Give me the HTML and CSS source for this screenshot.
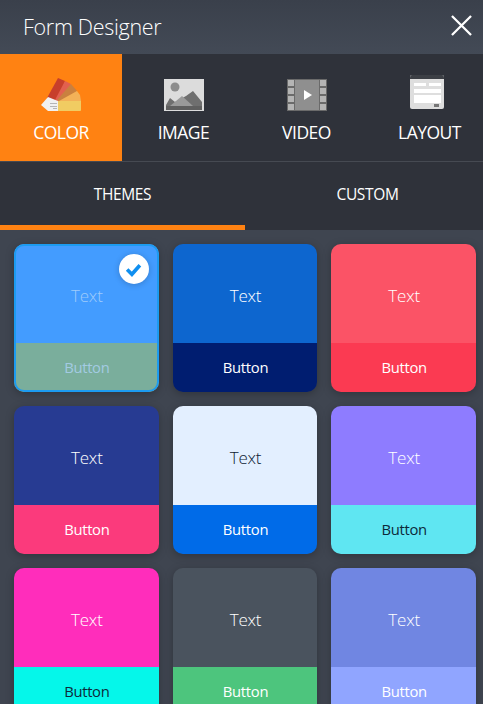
FILE: index.html
```html
<!DOCTYPE html>
<html lang="en">
<head>
    <meta charset="UTF-8">
    <title>Form Designer</title>
    <link rel="stylesheet" href="styles.css">
</head>
<body>
<div class="designer">
    <header class="top">
        <h1>Form Designer</h1>
        <svg class="close" viewBox="0 0 22 22"><path d="M1 1L21 21M21 1L1 21"/></svg>
    </header>
    <nav class="types">
        <a class="type active">
            <svg class="type-icon color-icon" viewBox="0 0 40 34">
                <path fill="#c73f2b" d="M6 20L17 0 L24 3 L16 24z"/>
                <path fill="#e2604f" d="M14 22L24 3 L30 6 L18 24z"/>
                <path fill="#c9803f" d="M16 22L30 6 L36 13 L20 24z"/>
                <path fill="#f3b158" d="M18 23L36 13 L39 17 L40 23z"/>
                <path fill="#f1cc62" d="M17 23H40V32Q40 33 39 33H17z"/>
                <path fill="#f1f1f1" d="M0 27L7 19 L17 23V33H7z"/>
                <path fill="#b5b5b5" d="M9 25h7v1h-7zM9 28h7v1h-7zM12 30h4v1h-4z"/>
            </svg>
            <span>COLOR</span>
        </a>
        <a class="type">
            <svg class="type-icon" viewBox="0 0 40 32">
                <path fill="#dcdcdc" d="M0 0H40V32H0z"/>
                <circle fill="#8c8c8c" cx="11" cy="8" r="4.500"/>
                <path fill="#6f6f6f" d="M2 26L6 19 L11 23 L22 17 L29 12 L38 23 V31H2z"/>
                <path fill="#9a9a9a" d="M6 27L18 17 L29 27z"/>
                <path fill="#5f5f5f" d="M2 27H38V31H2z"/>
            </svg>
            <span>IMAGE</span>
        </a>
        <a class="type">
            <svg class="type-icon" viewBox="0 0 40 32">
                <path fill="#6a6a6a" d="M0 0H40V32H0z"/>
                <path fill="#8f8f8f" d="M8 1H32V31H8z"/>
                <path fill="#b4b4b4" d="M1 1H7V7H1zM1 9H7V15H1zM1 17H7V23H1zM1 25H7V31H1zM33 1H39V7H33zM33 9H39V15H33zM33 17H39V23H33zM33 25H39V31H33z"/>
                <path fill="#fff" d="M17 11L25 16 L17 21z"/>
            </svg>
            <span>VIDEO</span>
        </a>
        <a class="type">
            <svg class="type-icon layout-icon" viewBox="0 0 34 34">
                <path fill="#dedede" d="M0 2Q0 0 2 0H32Q34 0 34 2V32Q34 34 32 34H2Q0 34 0 32z"/>
                <path fill="#3c3f45" d="M0 3Q0 0 2 0H32Q34 0 34 3V4H0z"/>
                <path fill="#fff" d="M4 8H16V11H4zM19 8H31V11H19zM4 14H31V18H4zM4 20H31V28H4z"/>
                <path fill="#777" d="M24 29H29V32H24z"/>
            </svg>
            <span>LAYOUT</span>
        </a>
    </nav>
    <div class="tabs">
        <a class="tab active">THEMES</a>
        <a class="tab">CUSTOM</a>
    </div>
    <div class="themes">
        <div class="theme selected" style="--main:#439cff;--btn:#7aae9c;--text:#9fcbfb;--btn-text:#a3cbe2">
            <span class="check">
                <svg viewBox="0 0 16 16"><path d="M2 8L6.500 12.500 L14 4"/></svg>
            </span>
            <div class="theme-main"><span>Text</span></div>
            <div class="theme-btn"><span>Button</span></div>
        </div>
        <div class="theme" style="--main:#0d66cf;--btn:#001d70;--text:#fff;--btn-text:#fff">
            <div class="theme-main"><span>Text</span></div>
            <div class="theme-btn"><span>Button</span></div>
        </div>
        <div class="theme" style="--main:#fb5366;--btn:#fb3a52;--text:#fff;--btn-text:#fff">
            <div class="theme-main"><span>Text</span></div>
            <div class="theme-btn"><span>Button</span></div>
        </div>
        <div class="theme" style="--main:#273b92;--btn:#fb3a7c;--text:#fff;--btn-text:#fff">
            <div class="theme-main"><span>Text</span></div>
            <div class="theme-btn"><span>Button</span></div>
        </div>
        <div class="theme" style="--main:#e3efff;--btn:#006be8;--text:#0d1b33;--btn-text:#fff">
            <div class="theme-main"><span>Text</span></div>
            <div class="theme-btn"><span>Button</span></div>
        </div>
        <div class="theme" style="--main:#8e7cff;--btn:#5fe6f2;--text:#fff;--btn-text:#0d2a3a">
            <div class="theme-main"><span>Text</span></div>
            <div class="theme-btn"><span>Button</span></div>
        </div>
        <div class="theme" style="--main:#ff2dbb;--btn:#05f7ea;--text:#fff;--btn-text:#0d2a3a">
            <div class="theme-main"><span>Text</span></div>
            <div class="theme-btn"><span>Button</span></div>
        </div>
        <div class="theme" style="--main:#4a535e;--btn:#4dc57d;--text:#fff;--btn-text:#fff">
            <div class="theme-main"><span>Text</span></div>
            <div class="theme-btn"><span>Button</span></div>
        </div>
        <div class="theme" style="--main:#7086e2;--btn:#90a5ff;--text:#fff;--btn-text:#fff">
            <div class="theme-main"><span>Text</span></div>
            <div class="theme-btn"><span>Button</span></div>
        </div>
    </div>
</div>
</body>
</html>
```

FILE: styles.css
```css
* {
    margin: 0;
    padding: 0;
    box-sizing: border-box;
}
html, body {
    height: 100%;
    overflow: hidden;
}
body {
    font-family: "Open Sans", "Noto Sans", sans-serif;
    background: #3f4550;
    color: #fff;
}
.designer {
    height: 704px;
    overflow: hidden;
}
.top {
    height: 54px;
    display: flex;
    align-items: center;
    justify-content: space-between;
    padding: 0 11px 2px 23px;
    background: linear-gradient(#3a404b, #434a56);
}
.top h1 {
    font-size: 21.500px;
    font-weight: 300;
    letter-spacing: -0.3px;
}
.close {
    width: 21px;
    height: 21px;
    margin-top: -2px;
    fill: none;
    stroke: #fff;
    stroke-width: 2.400;
}
.types {
    height: 108px;
    display: grid;
    grid-template-columns: 122px repeat(3, 123px);
    background: #2f323a;
    border-bottom: 1px solid #464a52;
    overflow: hidden;
}
.type {
    display: flex;
    flex-direction: column;
    align-items: center;
    padding-top: 25px;
    font-size: 17.500px;
    letter-spacing: -0.5px;
}
.type.active {
    background: #ff8212;
    height: 107px;
}
.type-icon {
    width: 40px;
    height: 32px;
    margin-bottom: 9px;
    flex: none;
}
.color-icon {
    height: 34px;
    margin-top: -1px;
    margin-bottom: 8px;
}
.layout-icon {
    width: 34px;
    height: 34px;
    margin: -4px 6px 11px 0;
}
.tabs {
    height: 68px;
    display: grid;
    grid-template-columns: 245px 245px;
    background: #2f323a;
}
.tab {
    display: flex;
    align-items: center;
    justify-content: center;
    padding-top: 1px;
    font-size: 15.500px;
    letter-spacing: -0.35px;
    border-bottom: 5px solid transparent;
}
.tab.active {
    border-bottom-color: #ff8212;
}
.themes {
    display: grid;
    grid-template-columns: repeat(3, 1fr);
    gap: 14px;
    padding: 14px 7px 0 14px;
}
.theme {
    position: relative;
    height: 148px;
    display: flex;
    flex-direction: column;
    border-radius: 10px;
    overflow: hidden;
    box-shadow: 0 2px 8px rgba(0, 0, 0, .25);
    text-align: center;
}
.theme-main {
    height: 99px;
    display: flex;
    align-items: center;
    justify-content: center;
    padding: 3px 0 0 1px;
    background: var(--main);
    color: var(--text);
    font-size: 17px;
    font-weight: 300;
    letter-spacing: -0.2px;
}
.theme-btn {
    flex: 1;
    display: flex;
    align-items: center;
    justify-content: center;
    padding: 0 0 2px 1px;
    background: var(--btn);
    color: var(--btn-text);
    font-size: 14.800px;
    letter-spacing: -0.3px;
}
.selected::after {
    content: "";
    position: absolute;
    inset: 0;
    border: 2px solid #1c9bf0;
    border-radius: 10px;
}
.check {
    position: absolute;
    top: 10px;
    right: 10px;
    width: 30px;
    height: 30px;
    display: flex;
    align-items: center;
    justify-content: center;
    background: #fff;
    border-radius: 50%;
    box-shadow: 0 1px 6px rgba(0, 0, 0, .2);
    z-index: 1;
}
.check svg {
    width: 17px;
    height: 17px;
    fill: none;
    stroke: #0f8ff0;
    stroke-width: 3.400;
}
```
